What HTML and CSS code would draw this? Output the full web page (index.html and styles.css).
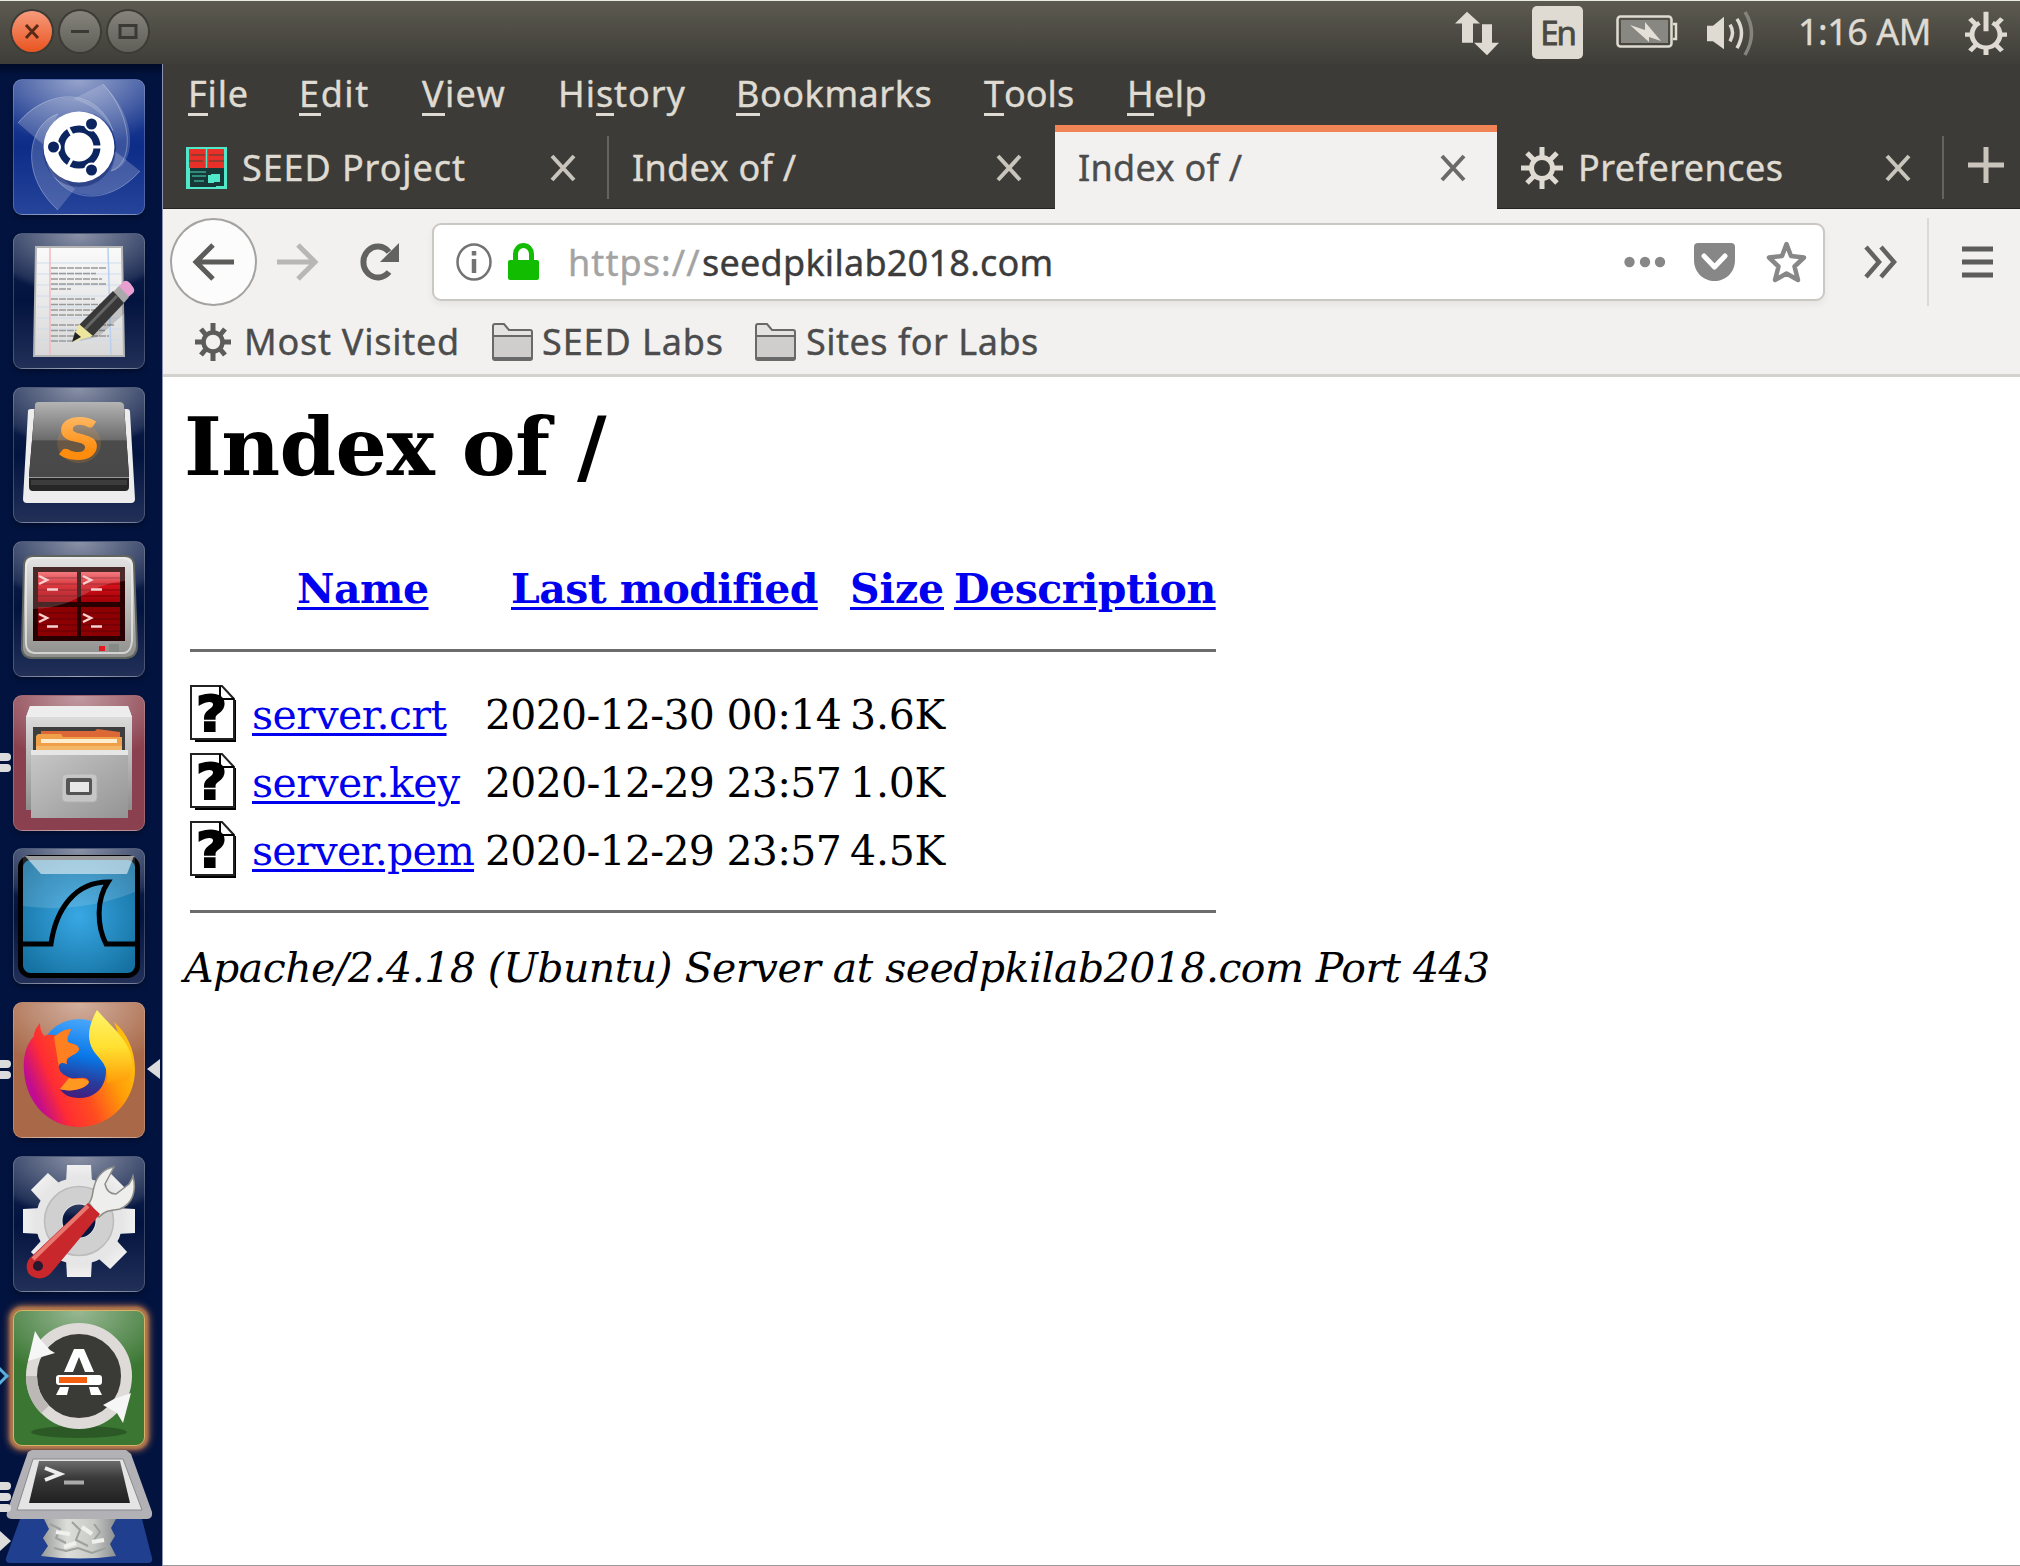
FILE: index.html
```html
<!DOCTYPE html>
<html lang="en">
<head>
<meta charset="utf-8">
<title>Index of /</title>
<link rel="stylesheet" href="styles.css">
</head>
<body>
<svg class="defs" width="0" height="0" aria-hidden="true">
  <defs>
    <linearGradient id="paper" x1="0" y1="0" x2="0" y2="1"><stop offset="0" stop-color="#fafafa"/><stop offset="1" stop-color="#d8d8d8"/></linearGradient>
    <linearGradient id="metal" x1="0" y1="0" x2="0" y2="1"><stop offset="0" stop-color="#e4e4e4"/><stop offset="1" stop-color="#8e8e8c"/></linearGradient>
    <linearGradient id="drawer" x1="0" y1="0" x2="1" y2="1"><stop offset="0" stop-color="#c8c8c8"/><stop offset="1" stop-color="#949494"/></linearGradient>
    <linearGradient id="key" x1="0" y1="0" x2="0" y2="1"><stop offset="0" stop-color="#b4b4b4"/><stop offset=".5" stop-color="#6c6c6c"/><stop offset=".52" stop-color="#4b4b4b"/><stop offset="1" stop-color="#484848"/></linearGradient>
    <linearGradient id="orange" x1="0" y1="0" x2="0" y2="1"><stop offset="0" stop-color="#ffc985"/><stop offset=".7" stop-color="#ff8c0c"/></linearGradient>
    <linearGradient id="red" x1="0" y1="0" x2="0" y2="1"><stop offset="0" stop-color="#f06068"/><stop offset=".45" stop-color="#d41018"/><stop offset="1" stop-color="#a00008"/></linearGradient>
    <radialGradient id="sea" cx=".5" cy=".5" r=".6"><stop offset="0" stop-color="#38a8e4"/><stop offset="1" stop-color="#1672a2"/></radialGradient>
    <linearGradient id="globe" x1=".6" y1="0" x2=".4" y2="1"><stop offset="0" stop-color="#4aa8fc"/><stop offset=".45" stop-color="#0878e8"/><stop offset=".75" stop-color="#283c9c"/><stop offset="1" stop-color="#481878"/></linearGradient>
    <linearGradient id="fox" x1=".1" y1=".7" x2="1" y2=".35"><stop offset="0" stop-color="#c00c90"/><stop offset=".2" stop-color="#ff2c34"/><stop offset=".45" stop-color="#ff4c20"/><stop offset=".75" stop-color="#ff9c08"/><stop offset="1" stop-color="#ffc010"/></linearGradient>
    <linearGradient id="flame" x1="0" y1="0" x2="0" y2="1"><stop offset="0" stop-color="#fff46c"/><stop offset=".5" stop-color="#ffe030"/><stop offset="1" stop-color="#ff9a06"/></linearGradient>
    <linearGradient id="gear" x1="0" y1="0" x2="0" y2="1"><stop offset="0" stop-color="#f0f0f0"/><stop offset="1" stop-color="#e2e2e2"/></linearGradient>
    <linearGradient id="screen" x1="0" y1="0" x2="0" y2="1"><stop offset="0" stop-color="#6c6c6c"/><stop offset=".4" stop-color="#3a3a3a"/><stop offset="1" stop-color="#202020"/></linearGradient>
    <linearGradient id="crumple" x1="0" y1="0" x2="1" y2="0"><stop offset="0" stop-color="#969a98"/><stop offset=".35" stop-color="#dcdeda"/><stop offset=".7" stop-color="#c8cac6"/><stop offset="1" stop-color="#8a8e90"/></linearGradient>
  </defs>
</svg>

<header class="panel">
  <div class="winbtns">
    <span class="wb wb-close"><svg viewBox="0 0 40 40"><path d="M14 14 26 27M26 14 14 27" stroke="#5a2a18" stroke-width="3"/></svg></span>
    <span class="wb"><svg viewBox="0 0 40 40"><path d="M11 20.500H29" stroke="#3a3935" stroke-width="3"/></svg></span>
    <span class="wb"><svg viewBox="0 0 40 40"><path d="M12 14.500H28V26.500H12Z" fill="none" stroke="#3a3935" stroke-width="3"/></svg></span>
  </div>
  <div class="tray">
    <svg class="i-net" width="46" height="45" viewBox="0 0 46 54" preserveAspectRatio="none" fill="#dfdbd2"><path d="M13 1 26 15H19V38H8V15H1ZM33 53 20 38H28V16H38V38H45Z"/></svg>
    <span class="lang">En</span>
    <svg class="i-bat" width="62" height="34" viewBox="0 0 62 34"><rect x="1.500" y="1.500" width="54" height="30" rx="3" fill="none" stroke="#dfdbd2" stroke-width="2.500"/><rect x="5" y="5" width="47" height="23" fill="#898781"/><path d="M57 9H60V24H57" fill="none" stroke="#dfdbd2" stroke-width="2.500"/><path d="M14 10 29 15V7L45 26 33 22V27Z" fill="#e4e0d8"/></svg>
    <svg class="i-vol" width="50" height="45" viewBox="0 5 50 46" preserveAspectRatio="none" fill="none" stroke="#dfdbd2" stroke-width="3.500"><path d="M1 20H7L18 11V44L7 36H1Z" fill="#dfdbd2" stroke="none"/><path d="M24 19Q29 27 24 36"/><path d="M31 13Q40 27 31 43"/><path d="M39 6Q52 27 39 50" stroke="#85837c"/></svg>
    <span class="clock t">1:16 AM</span>
    <svg class="i-power" width="42" height="44" viewBox="0 0 42 52" preserveAspectRatio="none" fill="none" stroke="#dfdbd2" stroke-width="5"><path d="M14.500 14A14 15.500 0 1 0 27.500 14M21 1V24M21 43V52M0 28H8M34 28H42M5 9 11 16M37 9 31 16M5 47 11 40M37 47 31 40"/></svg>
  </div>
</header>

<div class="desktop">
<nav class="launcher">
  <div class="tile tile-dash"><svg viewBox="0 0 132 136">
    <path d="M5 44C30 10 85 8 100 52 80 20 42 30 33 68Z" fill="#fff" opacity=".2"/><path d="M90 5C130 45 120 90 98 92 112 60 95 30 60 20Z" fill="#fff" opacity=".18"/><path d="M127 92C95 130 45 120 34 84 50 110 85 112 102 72Z" fill="#fff" opacity=".2"/><path d="M45 131C5 95 15 45 45 35 28 70 35 90 62 110Z" fill="#fff" opacity=".18"/>
    <path d="M5 44C35 8 85 8 100 52M90 5C122 40 120 85 98 92M127 92C95 128 50 125 34 84M45 131C5 95 15 45 45 35" stroke="#fff" stroke-opacity=".3" fill="none"/>
    <ellipse cx="66" cy="71" rx="36" ry="37" fill="#001050" opacity=".35"/><circle cx="66" cy="68" r="35.500" fill="#fff"/>
    <circle cx="66" cy="68" r="18" fill="none" stroke="#0b2560" stroke-width="7"/><path d="M80 68H90M59 56 54 47M59 80 54 89" stroke="#fff" stroke-width="3"/>
    <g fill="#0b2560" stroke="#fff" stroke-width="2"><circle cx="40.500" cy="68" r="6.500"/><circle cx="78.500" cy="45" r="6.500"/><circle cx="78.500" cy="91" r="6.500"/></g></svg></div>
  <div class="tile"><svg viewBox="0 0 132 136">
    <path d="M23 14H109L111 123H21Z" fill="url(#paper)" stroke="#b4b4b4" stroke-width="2"/><path d="M24 30H108M24 41H108M24 52H108M24 63H108M24 74H109M24 85H109M24 96H109M24 107H109" stroke="#cfdcec" stroke-width="1"/><path d="M37 15V122" stroke="#f4b8bc" stroke-width="1.500"/><path d="M95 15 98 122" stroke="#b8d0f0" stroke-width="1.500"/>
    <path d="M38 35H94M38 40.500H83M38 46H89M38 51H94M38 56H58M38 66H82M38 71.500H90M38 77H85M38 82H80M38 92H102M38 97.500H92M38 103H96M38 108H60" stroke="#999" stroke-width="1.700" stroke-dasharray="7 1"/>
    <path d="M66 108 112 62 112 80 85 104Z" opacity=".15"/><path d="M104 55 110 49Q113 46 117 50L120 54Q123 58 119 61L114 65Z" fill="#e9a0d0"/><path d="M99 60 106 53 116 64 110 71Z" fill="#aaa"/><path d="M66 92 100 58 111 70 79 104Z" fill="#383838"/><path d="M72 96 104 63" stroke="#666" stroke-width="3"/><path d="M59 109 66 91 80 103Z" fill="#ece69c"/><path d="M59 109 62 99 68 104Z" fill="#222"/></svg></div>
  <div class="tile"><svg viewBox="0 0 132 136">
    <path d="M15 24Q15 22 18 22H114Q117 22 117 25L122 112Q122 116 118 116H14Q10 116 10 112Z" fill="#ededed"/><path d="M22 18Q22 15 25 15H107Q110 15 111 18L116 88V100Q116 104 112 104H20Q16 104 16 100V88Z" fill="#262626"/><path d="M22 18Q22 15 25 15H107Q110 15 111 18L116 90H16Z" fill="url(#key)"/><path d="M16 90.500H116" stroke="#999"/><path d="M18 93H114V98H18Z" fill="#3c3c3c"/>
    <ellipse cx="66" cy="56" rx="22" ry="20" fill="#ff9b28" opacity=".16"/><text x="45" y="73" font-family="Lato" font-weight="800" font-size="58" textLength="41" lengthAdjust="spacingAndGlyphs" fill="url(#orange)">S</text></svg></div>
  <div class="tile"><svg viewBox="0 0 132 136">
    <path d="M20 15H112Q120 15 121 23L124 105Q124 116 113 117H19Q8 116 9 105L11 23Q12 15 20 15Z" fill="url(#metal)" stroke="#60645e" stroke-width="2"/><path d="M21 17H111Q118 18 119 25V100Q118 111 111 112H21Q13 111 13 102V25Q14 18 21 17Z" fill="none" stroke="#eee" stroke-width="2" opacity=".7"/><rect x="20" y="26" width="92" height="74" fill="#280000"/>
    <g fill="url(#red)"><rect x="25" y="31" width="39" height="30"/><rect x="68" y="31" width="39" height="30"/></g><g fill="#8c0004"><rect x="25" y="66" width="39" height="29"/><rect x="68" y="66" width="39" height="29"/></g><path d="M25 37H107M25 43H107M25 49H107M25 55H107M25 72H107M25 78H107M25 84H107M25 90H107" stroke="#300" stroke-opacity=".25" stroke-width="2"/><path d="M20 26H112V40C70 44 70 66 20 68Z" fill="#fff" opacity=".16"/>
    <g fill="none" stroke="#f8d0d0" stroke-width="2.500"><path d="M26 35 34 39 26 43M34 48.500H45M70 35 78 39 70 43M78 48.500H89M26 73 34 77 26 81M34 85.500H45M70 73 78 77 70 81M78 85.500H89"/></g><rect x="86" y="105" width="6" height="5" fill="#e81820"/><rect x="96" y="103" width="10" height="8" fill="#868a84"/></svg></div>
  <div class="tile tile-files"><span class="pips"><i></i><i></i></span><svg viewBox="0 0 132 136">
    <path d="M13 22 17 11H115L119 22V115H13Z" fill="url(#metal)"/><path d="M13 22 17 11H115L119 22Z" fill="#ededed"/><rect x="20" y="32" width="92" height="25" fill="#3e3e3e"/><path d="M28 36H82L84 34 107 37V56H28Z" fill="#dc6838"/><path d="M23 41 25 39H48L50 42H109V58H23Z" fill="#f0a048"/><path d="M28 44H104V48H28Z" fill="#fcecd0"/><path d="M23 51H109V58H23Z" fill="#f2b868"/>
    <path d="M18 55H115V123H18Z" fill="url(#drawer)"/><path d="M18 55H115V60H18Z" fill="#e6e6e6"/><rect x="49" y="79" width="35" height="28" rx="4" fill="#c6c6c6" stroke="#b0b0b0"/><rect x="53" y="83" width="26" height="17" rx="2" fill="#555"/><rect x="57" y="87" width="19" height="10" fill="#e8e8e8"/></svg></div>
  <div class="tile"><svg viewBox="0 0 132 136">
    <rect x="7.500" y="9.500" width="117" height="118" rx="10" fill="url(#sea)" stroke="#000" stroke-width="5"/><path d="M12 8H121L114 26H28Z" fill="#fff" opacity=".55"/><path d="M10 8H122V44Q66 66 10 58Z" fill="#fff" opacity=".14"/><path d="M9 96H38C43 60 63 34 95 34 83 52 84 78 93 96H123" fill="none" stroke="#000" stroke-width="5"/></svg></div>
  <div class="tile tile-fox"><span class="pips"><i></i><i></i></span><span class="active-mark"></span><svg viewBox="0 0 132 136">
    <circle cx="66" cy="57" r="40" fill="url(#globe)"/>
    <path d="M27 21C22 27 21 31 21 34 12 44 10 56 11 70 14 104 38 125 66 125 98 125 122 98 122 68 122 47 113 30 101 20 104 28 106 32 105 37 98 32 88 36 86 46 99 65 95 96 66 96 56 96 50 92 47 87 58 91 74 86 76 80 74 73 65 77 58 76 52 74 47 71 46 66 45 61 49 60 54 62 51 53 65 54 66 47 64 41 60 43 55 40 53 34 57 32 58 27 51 28 46 31 44 34 37 32 34 33 31 34 28 30 27 26 27 21Z" fill="url(#fox)"/>
    <path d="M84 8C76 22 73 36 80 48 88 60 96 62 94 82 104 76 115 86 119 68 122 42 101 28 84 8Z" fill="url(#flame)"/><path d="M47 87C58 91 74 86 76 80 71 74 64 79 56 76Z" fill="#ff9820"/><path d="M46 66C45 61 49 60 54 62 51 53 65 54 66 47 64 41 60 43 55 40 53 34 57 32 58 27 49 28 46 31 41 35Z" fill="#ff8020"/></svg></div>
  <div class="tile"><svg viewBox="0 0 132 136">
    <g transform="translate(66 65)"><g fill="url(#gear)"><path id="tooth" d="M-12 -56H12L13 -38H-13Z"/><use href="#tooth" transform="rotate(45)"/><use href="#tooth" transform="rotate(90)"/><use href="#tooth" transform="rotate(135)"/><use href="#tooth" transform="rotate(180)"/><use href="#tooth" transform="rotate(225)"/><use href="#tooth" transform="rotate(270)"/><use href="#tooth" transform="rotate(315)"/></g><circle r="30" fill="none" stroke="#e6e6e6" stroke-width="27"/><circle r="26" fill="none" stroke="#d0d0d0" stroke-width="17"/><circle r="34.500" fill="none" stroke="#bbb" stroke-width="1.500"/></g>
    <path d="M76 47C80 42 79 38 81 31 84 18 93 12 101 11L92 28Q94 38 103 38L116 28Q119 23 120 20C124 36 119 48 107 53 98 55 94 53 86 61Z" fill="#eeeeec" stroke="#8c8c88" stroke-width="1.500"/><path d="M75 47 87 58 38 117C32 124 22 124 16 118 12 112 13 105 19 100Z" fill="#c8282c"/><path d="M75 50 20 103" stroke="#e87870" stroke-width="4"/><circle cx="25" cy="110" r="5" fill="#2a1830"/></svg></div>
  <div class="tile tile-update"><span class="chev"></span><svg viewBox="0 0 132 136">
    <ellipse cx="66" cy="122" rx="48" ry="6" fill="#000" opacity=".25"/><circle cx="66" cy="66" r="47.500" fill="#3a3a36" stroke="#dedad8" stroke-width="11"/><path d="M18.500 66A47.500 47.500 0 0 0 32 99.500" fill="none" stroke="#bcb8b6" stroke-width="11"/><path d="M22 21 27 29 37 40 42 43 15 51Z" fill="#f6f6f6"/><path d="M118 83 110 113 104 103 90 95 101 89Z" fill="#f6f6f6"/>
    <path d="M51 62 61 39H71L81 62H72L66 47 60 62ZM47 77H56L54 85H43ZM76 77H85L89 85H78Z" fill="#fff"/><rect x="43" y="65" width="46" height="10" rx="3" fill="#fff"/><rect x="46" y="67" width="28" height="6" fill="#f46010"/></svg></div>
  <div class="stack"><span class="pips pips3"><i></i><i></i><i></i></span><span class="tri"></span><svg viewBox="0 0 162 117">
    <path d="M20 69H142L152 108Q153 113 148 113H10Q5 113 6 108Z" fill="#203f8e"/><path d="M44 69H116L111 78 115 86 110 94 116 106Q80 111 41 106L48 96 43 88 49 79Z" fill="url(#crumple)"/>
    <path d="M50 74 60 79 56 88 66 93M72 72 80 80 76 90 88 96M94 74 100 82 94 90M54 98 66 101 78 98 92 103 106 98" stroke="#9da19e" stroke-width="2" fill="none"/><path d="M56 82 70 84M82 77 92 84M64 97 76 93M92 92 104 90" stroke="#f0f0ec" stroke-width="4" fill="none"/>
    <path d="M28 2 32 0H126L131 4 152 62Q153 69 147 69H12Q5 69 7 62Z" fill="#b2b2b6"/><path d="M33 9H123L142 60H17Z" fill="#e4e4e4" stroke="#8a8a8a"/><path d="M39 11H120L130 53H29Z" fill="url(#screen)"/><path d="M45 18 60 24 45 30" fill="none" stroke="#eee" stroke-width="4"/><path d="M64 32.500H84" stroke="#aaa" stroke-width="4"/></svg></div>
</nav>

<main class="browser">
  <div class="menubar">
    <span class="m1 t"><u>F</u>ile</span><span class="m2 t"><u>E</u>dit</span><span class="m3 t"><u>V</u>iew</span><span class="m4 t">Hi<u>s</u>tory</span><span class="m5 t"><u>B</u>ookmarks</span><span class="m6 t"><u>T</u>ools</span><span class="m7 t"><u>H</u>elp</span>
  </div>
  <div class="tabs">
    <div class="tab tab-seed"><svg width="41" height="42" viewBox="0 0 41 42"><rect width="41" height="42" fill="#50e8c8"/><rect x="3" y="2" width="35" height="19" fill="#e83028"/><path d="M20.500 0V42" stroke="#50e8c8" stroke-width="1.500"/><path d="M5 8H19M3 14H17M23 8H38M23 14H38" stroke="#7c3c30" stroke-width="1.500"/><path d="M4 21H38V39H28V28H22V36H30V40H4Z" fill="#183838"/><path d="M6 29H20M8 34H18M4 25H20" stroke="#38a890" stroke-width="1.500"/><path d="M25 27H34V35H26Z" fill="#50e8c8"/></svg><span class="t">SEED Project</span><svg class="x" viewBox="0 0 24 26"><path d="M1 1 23 25M23 1 1 25"/></svg></div>
    <div class="tab"><span class="t">Index of /</span><svg class="x" viewBox="0 0 24 26"><path d="M1 1 23 25M23 1 1 25"/></svg></div>
    <div class="tab tab-on"><span class="t">Index of /</span><svg class="x" viewBox="0 0 24 26"><path d="M1 1 23 25M23 1 1 25"/></svg></div>
    <div class="tab tab-pref"><svg width="42" height="42" viewBox="-21 -21 42 42" fill="none" stroke="#dfdbd2"><circle r="10.500" stroke-width="5"/><path d="M0-21V-11M0 21V11M-21 0H-11M21 0H11M-15-15-8-8M15-15 8-8M-15 15-8 8M15 15 8 8" stroke-width="5"/></svg><span class="t">Preferences</span><svg class="x" viewBox="0 0 24 26"><path d="M1 1 23 25M23 1 1 25"/></svg></div>
    <div class="newtab"><svg width="36" height="36" viewBox="0 0 36 36"><path d="M0 18H36M18 0V36" stroke="#c9c5bd" stroke-width="5"/></svg></div>
  </div>
  <div class="toolbar">
    <span class="back"><svg width="42" height="36" viewBox="0 0 42 36" fill="none" stroke="#5c5c5a" stroke-width="5"><path d="M41 18H4M20 1 3 18 20 35"/></svg></span>
    <svg class="fwd" width="42" height="36" viewBox="0 0 42 36" fill="none" stroke="#b8b7b5" stroke-width="5"><path d="M1 18H38M22 1 39 18 22 35"/></svg>
    <svg class="reload" width="40" height="38" viewBox="0 0 40 38"><path d="M29 29A14.500 15.500 0 1 1 29 9" fill="none" stroke="#626260" stroke-width="6"/><path d="M39 0V19H20Z" fill="#626260"/></svg>
    <div class="url">
      <svg width="36" height="38" viewBox="0 0 36 38" fill="none" stroke="#737373"><ellipse cx="18" cy="19" rx="16.500" ry="17.500" stroke-width="2.500"/><path d="M18 16V30M18 8V12.500" stroke-width="4.500"/></svg>
      <svg class="lock" width="31" height="38" viewBox="0 0 31 38"><path d="M7.500 20V11A8 8.500 0 0 1 23.500 11V20" fill="none" stroke="#12bc00" stroke-width="5"/><rect y="17" width="31" height="20" rx="2" fill="#12bc00"/></svg>
      <span class="addr"><span class="t proto">https://</span><span class="t host">seedpkilab2018.com</span></span>
      <svg class="dots" width="42" height="12" viewBox="0 0 42 12" fill="#878787"><circle cx="5.500" cy="6" r="5.200"/><circle cx="21" cy="6" r="5.200"/><circle cx="36" cy="6" r="5.200"/></svg>
      <svg class="pocket" width="41" height="38" viewBox="0 0 41 38"><path d="M4 0H37Q41 0 41 4V17C41 30 31 38 20.500 38 10 38 0 30 0 17V4Q0 0 4 0Z" fill="#878787"/><path d="M10 13 20.500 24 31 13" fill="none" stroke="#fff" stroke-width="5" stroke-linecap="round" stroke-linejoin="round"/></svg>
      <svg class="star" width="41" height="43" viewBox="0 0 41 43"><path d="M20.500 4 25 16 38 17.500 28.500 26.500 32 40 20.500 33.500 9 40 12.500 26.500 3 17.500 16 16Z" fill="none" stroke="#878787" stroke-width="4.500" stroke-linejoin="round"/></svg>
    </div>
    <svg class="more" width="34" height="32" viewBox="0 0 34 32" fill="none" stroke="#626260" stroke-width="4.500"><path d="M2 1 15 16 2 31M17 1 30 16 17 31"/></svg>
    <span class="burger"><svg width="31" height="32" viewBox="0 0 31 32"><path d="M0 3H31M0 16H31M0 29H31" stroke="#5c5c5a" stroke-width="5"/></svg></span>
  </div>
  <div class="bookmarks">
    <svg width="36" height="38" viewBox="-18 -19 36 38" fill="none" stroke="#5c5c5a"><circle r="9.500" stroke-width="4.500"/><path d="M0-19V-10M0 19V10M-18 0H-10M18 0H10M-12-13-7-7M12-13 7-7M-12 13-7 7M12 13 7 7" stroke-width="5"/></svg>
    <span class="bm1 t">Most Visited</span>
    <svg width="41" height="38" viewBox="0 0 41 38" stroke="#696969" stroke-width="2"><path d="M1 11V3Q1 1 3 1H12L17 7H38Q40 7 40 9V35Q40 37 38 37H3Q1 37 1 35Z" fill="#e4e3e1"/><path d="M1 13H40V35H1Z" fill="#cfcecc"/></svg>
    <span class="bm2 t">SEED Labs</span>
    <svg width="41" height="38" viewBox="0 0 41 38" stroke="#696969" stroke-width="2"><path d="M1 11V3Q1 1 3 1H12L17 7H38Q40 7 40 9V35Q40 37 38 37H3Q1 37 1 35Z" fill="#e4e3e1"/><path d="M1 13H40V35H1Z" fill="#cfcecc"/></svg>
    <span class="bm3 t">Sites for Labs</span>
  </div>
  <section class="page">
    <h1>Index of /</h1>
    <div class="listing">
      <div class="row head"><span></span><a>Name</a><a>Last modified</a><a>Size</a><a>Description</a></div>
      <div class="rule"></div>
      <div class="row"><svg class="file" viewBox="0 0 46 57"><path d="M5 53V57H46V15H42V53Z"/><path d="M1 1H32L44 14V54H1Z" fill="#fff" stroke="#222" stroke-width="2"/><path d="M30 1V14H44" fill="none" stroke="#000" stroke-width="2"/><text x="6" y="46" font-family="DejaVu Sans" font-weight="bold" font-size="50" textLength="31" lengthAdjust="spacingAndGlyphs" stroke="#000" stroke-width="2">?</text></svg><a>server.crt</a><span class="date">2020-12-30 00:14</span><span class="size">3.6K</span></div>
      <div class="row"><svg class="file" viewBox="0 0 46 57"><path d="M5 53V57H46V15H42V53Z"/><path d="M1 1H32L44 14V54H1Z" fill="#fff" stroke="#222" stroke-width="2"/><path d="M30 1V14H44" fill="none" stroke="#000" stroke-width="2"/><text x="6" y="46" font-family="DejaVu Sans" font-weight="bold" font-size="50" textLength="31" lengthAdjust="spacingAndGlyphs" stroke="#000" stroke-width="2">?</text></svg><a>server.key</a><span class="date">2020-12-29 23:57</span><span class="size">1.0K</span></div>
      <div class="row"><svg class="file" viewBox="0 0 46 57"><path d="M5 53V57H46V15H42V53Z"/><path d="M1 1H32L44 14V54H1Z" fill="#fff" stroke="#222" stroke-width="2"/><path d="M30 1V14H44" fill="none" stroke="#000" stroke-width="2"/><text x="6" y="46" font-family="DejaVu Sans" font-weight="bold" font-size="50" textLength="31" lengthAdjust="spacingAndGlyphs" stroke="#000" stroke-width="2">?</text></svg><a class="pem">server.pem</a><span class="date">2020-12-29 23:57</span><span class="size">4.5K</span></div>
      <div class="rule rule2"></div>
    </div>
    <address>Apache/2.4.18 (Ubuntu) Server at seedpkilab2018.com Port 443</address>
  </section>
</main>
</div>
</body>
</html>
```
FILE: styles.css
```css
* { box-sizing: border-box; }
body { margin: 0; width: 2020px; height: 1566px; overflow: hidden; background: #fff; font-family: "Noto Sans", "Open Sans", sans-serif; font-size: 36px; color: #4c4c4c; }
svg { display: block; flex: none; overflow: visible; }
.defs { position: absolute; }
.t { white-space: pre; -webkit-text-stroke: .4px; }

/* Top panel */
.panel { height: 64px; border-top: 1px solid #e8ece4; background: linear-gradient(#5c5a50, #3e3d38); display: flex; justify-content: space-between; }
.winbtns { display: flex; gap: 8px; padding: 10px 0 0 12px; }
.wb { width: 40px; height: 41px; border-radius: 50%; background: linear-gradient(#85837c, #5f5e57); box-shadow: 0 0 0 2px #3c3b36; }
.wb-close { background: linear-gradient(#f79b7c, #e95420); }
.tray { display: flex; align-items: flex-start; }
.i-net { margin: 10px 32px 0 0; }
.lang { width: 51px; height: 53px; margin: 5px 33px 0 0; border-radius: 5px; background: #dfdbd2; color: #4a4943; font-size: 33px; line-height: 54px; text-align: center; letter-spacing: -2px; -webkit-text-stroke: .8px; }
.i-bat { margin: 14px 28px 0 0; }
.i-vol { margin: 10px 42px 0 0; }
.clock { width: 133px; margin-right: 34px; line-height: 61px; color: #dfdbd2; letter-spacing: -.5px; }
.i-power { margin: 10px 13px 0 0; }

/* Launcher */
.desktop { display: flex; height: 1502px; }
.launcher { width: 163px; padding: 15px 0 0 13px; background: linear-gradient(#000a26, #02133f 12px); border-right: 1px solid #8d93b4; display: flex; flex-direction: column; gap: 17.900px; }
.tile { position: relative; flex: none; width: 132px; height: 136px; border-radius: 9px; border: 1px solid rgba(255,255,255,.2); background: radial-gradient(ellipse 75% 45% at 50% 0, rgba(255,255,255,.5), rgba(255,255,255,.1) 90%, transparent), linear-gradient(#14244e, #02133f 50%, #223058); box-shadow: 0 3px 5px rgba(0,0,0,.3); }
.tile > svg { width: 132px; height: 136px; margin: -1px; }
.tile-dash { background: radial-gradient(ellipse 75% 50% at 50% 0, rgba(255,255,255,.5), rgba(255,255,255,0)), linear-gradient(#2c4898, #0c2c88 50%, #26449a); }
.tile-files { background: radial-gradient(ellipse 75% 50% at 50% 0, rgba(255,255,255,.5), rgba(255,255,255,.05)), #843644; }
.tile-fox { background: radial-gradient(ellipse 75% 50% at 50% 0, rgba(255,255,255,.5), rgba(255,255,255,.05)), #a4603e; }
.tile-update { background: radial-gradient(ellipse 75% 50% at 50% 0, rgba(255,255,255,.5), rgba(255,255,255,.05)), #307028; border: 1px solid #d8b468; box-shadow: 0 0 3px 3px #b0784c, 0 0 7px 4px #c07850; }
.pips { position: absolute; left: -14px; top: 57px; display: grid; gap: 3px; }
.pips i { width: 11px; height: 8px; background: #dcdcdc; border-radius: 0 5px 5px 0; }
.active-mark { position: absolute; left: 133px; top: 56px; border: solid transparent; border-width: 10px 13px 10px 0; border-right-color: #dcdcdc; }
.chev { position: absolute; left: -22px; top: 58px; width: 14px; height: 14px; border: solid #58b0dc; border-width: 3px 3px 0 0; transform: rotate(45deg); }
.stack { position: relative; flex: none; width: 162px; height: 117px; margin: -14px 0 0 -13px; }
.stack svg { width: 162px; height: 117px; }
.pips3 { left: 0; top: 32px; }
.tri { position: absolute; left: 0; top: 81px; border: solid transparent; border-width: 10px 0 10px 11px; border-left-color: #dcdcdc; }

/* Browser chrome */
.browser { flex: 1; display: flex; flex-direction: column; }
.menubar { height: 61px; background: #3c3b37; color: #dfdbd2; display: flex; padding-left: 25px; line-height: 60px; }
.menubar u { text-decoration: none; box-shadow: inset 0 -3px #dfdbd2; line-height: 44px; display: inline-block; }
.m1 { width: 111px; letter-spacing: .85px; }
.m2 { width: 123px; letter-spacing: 1.600px; }
.m3 { width: 136px; letter-spacing: 1.300px; }
.m4 { width: 178px; letter-spacing: .95px; }
.m5 { width: 248px; letter-spacing: .55px; }
.m6 { width: 143px; }
.m7 { letter-spacing: .4px; }
.tabs { height: 84px; background: #3c3b37; border-bottom: 1px solid #24231f; display: flex; color: #dfdbd2; }
.tab { position: relative; width: 446px; display: flex; align-items: center; padding: 2px 34px 0 23px; line-height: 82px; letter-spacing: .3px; }
.tab .x { width: 24px; height: 26px; margin-left: auto; stroke: #c9c5bd; stroke-width: 4; }
.tab > svg:first-child { margin-right: 15px; }
.tab-seed { letter-spacing: .9px; }
.tab-seed::after, .tab-pref::after { content: ""; position: absolute; right: 0; top: 11px; width: 2px; height: 63px; background: #66645e; }
.tab-on { width: 442px; height: 84px; background: #f2f1f0; border-top: 7px solid #f08456; padding: 0 32px 5px 23px; color: #4c4c4c; }
.tab-on .x { stroke: #6a6a68; }
.tab-pref { width: 447px; padding-left: 24px; letter-spacing: .45px; }
.newtab { padding: 22px 0 0 24px; }
.toolbar { height: 98px; background: #f2f1f0; display: flex; align-items: center; padding: 0 0 0 7px; }
.toolbar > * { position: relative; flex: none; }
.back { width: 87px; height: 88px; margin-top: 7px; border: 2px solid #a4a3a1; border-radius: 50%; background: #fcfcfc; display: flex; align-items: center; justify-content: center; }
.fwd { margin: 7px 0 0 19px; }
.reload { margin: 7px 0 0 42px; }
.url { width: 1393px; height: 78px; margin: 7px 0 0 32px; background: #fff; border: 2px solid #cbc7c3; border-radius: 9px; box-shadow: 0 4px 7px rgba(0,0,0,.05); display: flex; align-items: center; padding-left: 22px; }
.lock { margin-left: 16px; }
.addr { width: 1085px; padding-left: 29px; margin-top: 2px; display: flex; color: #3c3c3c; }
.proto { width: 134px; color: #a3a3a3; letter-spacing: 1.100px; }
.host { letter-spacing: .25px; }
.pocket { margin-left: 28px; }
.star { margin-left: 31px; }
.more { margin: 7px 0 0 39px; }
.burger { width: 92px; height: 88px; margin: 8px 0 0 29px; border-left: 2px solid #dad9d7; display: flex; align-items: center; padding-left: 33px; }
.bookmarks { height: 70px; background: #f2f1f0; border-bottom: 3px solid #d5d2ce; display: flex; align-items: center; padding: 2px 0 0 32px; }
.bm1 { width: 248px; margin-left: 13px; letter-spacing: .75px; }
.bm2 { width: 213px; margin-left: 9px; letter-spacing: .9px; }
.bm3 { margin-left: 10px; letter-spacing: .5px; }

/* Directory index */
.page { height: 1189px; padding: 22px 0 0 21px; color: #000; border-bottom: 1px solid #999; font-family: "DejaVu Serif", serif; font-size: 41px; }
h1 { margin: 0; font-size: 81px; line-height: 96px; letter-spacing: -.6px; }
.listing { width: 1026px; margin: 48px 0 0 6px; }
.row { display: grid; grid-template-columns: 62px 233px 365px 104px 262px; justify-items: start; height: 68px; line-height: 68px; white-space: nowrap; }
.row a { color: #0000ee; text-decoration: underline; text-decoration-thickness: 3px; text-underline-offset: 4px; letter-spacing: -.5px; }
.row .pem { letter-spacing: -.78px; }
.date { letter-spacing: -.72px; }
.size { letter-spacing: -.2px; }
.head { font-weight: bold; height: 92px; line-height: 92px; }
.head a:nth-child(2) { margin-left: 45px; }
.head a:nth-child(3) { margin-left: 26px; letter-spacing: -.6px; }
.head a:nth-child(4) { letter-spacing: -.14px; }
.rule { height: 3px; margin: 14px 0 29px; background: #6c6c6c; }
.rule2 { margin: 25px 0 0; }
.file { width: 46px; height: 57px; margin-top: 4px; }
address { line-height: 60px; margin-top: 25px; letter-spacing: -.53px; white-space: nowrap; }
```
